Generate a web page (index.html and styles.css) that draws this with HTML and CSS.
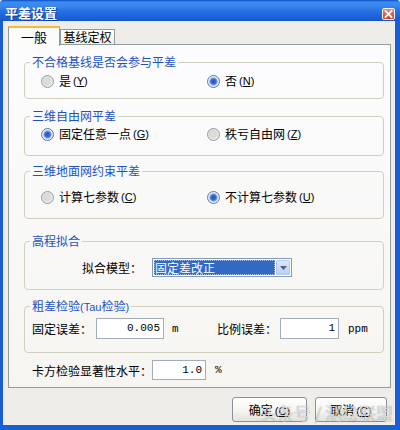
FILE: index.html
```
<!DOCTYPE html>
<html lang="zh-CN">
<head>
<meta charset="utf-8">
<title>平差设置</title>
<link rel="stylesheet" href="styles.css">
</head>
<body>
<div class="window">
  <div class="titlebar">
    <span class="title">平差设置</span>
    <span class="close"><svg width="9" height="8" viewBox="0 0 9 8"><path d="M1.5 1 L7.5 7 M7.5 1 L1.5 7" stroke="#fff" stroke-width="1.8" stroke-linecap="square"/></svg></span>
  </div>
  <div class="client">
    <div class="tabs">
      <div class="tab active">一般</div>
      <div class="tab">基线定权</div>
    </div>
    <div class="panel">
      <fieldset class="group g1">
        <legend>不合格基线是否会参与平差</legend>
        <div class="radios">
          <label class="opt"><span class="radio"></span>是<span class="key">(<u>Y</u>)</span></label>
          <label class="opt"><span class="radio on"></span>否<span class="key">(<u>N</u>)</span></label>
        </div>
      </fieldset>
      <fieldset class="group g2">
        <legend>三维自由网平差</legend>
        <div class="radios">
          <label class="opt"><span class="radio on"></span>固定任意一点<span class="key">(<u>G</u>)</span></label>
          <label class="opt"><span class="radio"></span>秩亏自由网<span class="key">(<u>Z</u>)</span></label>
        </div>
      </fieldset>
      <fieldset class="group g3">
        <legend>三维地面网约束平差</legend>
        <div class="radios">
          <label class="opt"><span class="radio"></span>计算七参数<span class="key">(<u>C</u>)</span></label>
          <label class="opt"><span class="radio on"></span>不计算七参数<span class="key">(<u>U</u>)</span></label>
        </div>
      </fieldset>
      <fieldset class="group g4">
        <legend>高程拟合</legend>
        <div class="fitrow">
          <span class="lbl-fit">拟合模型：</span>
          <span class="select"><span class="sel-value">固定差改正</span><span class="sel-btn"><svg width="7" height="4" viewBox="0 0 7 4"><path d="M0 0 H7 L3.5 4 Z" fill="#4d6185"/></svg></span></span>
        </div>
      </fieldset>
      <fieldset class="group g5">
        <legend>粗差检验<span class="lat">(Tau</span>检验<span class="lat">)</span></legend>
        <div class="errrow">
          <span class="lbl-err1">固定误差：</span>
          <span class="input in1">0.005</span>
          <span class="unit u1">m</span>
          <span class="lbl-err2">比例误差：</span>
          <span class="input in2">1</span>
          <span class="unit u2">ppm</span>
        </div>
      </fieldset>
      <div class="chirow">
        <span class="lbl-chi">卡方检验显著性水平：</span>
        <span class="input in3">1.0</span>
        <span class="unit u3">%</span>
      </div>
    </div>
    <div class="buttons">
      <span class="btn b1">确定<span class="key">(<u>C</u>)</span></span>
      <span class="btn b2">取消<span class="key">(<u>C</u>)</span></span>
    </div>
  </div>
  <div class="watermark">头条号 / 测绘联盟</div>
</div>
</body>
</html>
```
FILE: styles.css
```
* { box-sizing: border-box; }
html, body { margin: 0; padding: 0; }
body {
  width: 400px;
  height: 430px;
  overflow: hidden;
  font-family: "Noto Sans CJK SC", "Noto Sans", sans-serif;
  font-size: 12px;
  color: #000;
  background: #fff;
}
.key, .lat {
  font-family: "Liberation Sans", "DejaVu Sans", sans-serif;
  font-size: 11px;
  margin-left: 2px;
}
.lat { margin-left: 0; }
.window {
  position: relative;
  width: 400px;
  height: 430px;
  display: flex;
  flex-direction: column;
}
.titlebar {
  height: 21px;
  flex: none;
  display: flex;
  justify-content: space-between;
  align-items: flex-start;
  padding: 4px 5px 0 5px;
  background: linear-gradient(#0a4cc0 0, #3b8df2 2px, #3a86ee 6px, #2670e2 11px, #1d62d8 17px, #1857cc 21px);
  border-radius: 3px 3px 0 0;
}
.title {
  color: #fff;
  font-weight: bold;
  font-size: 13px;
  line-height: 17px;
  text-shadow: 1px 1px 0 #0a3a9a;
}
.close {
  width: 13px;
  height: 12px;
  margin-top: 4px;
  border: 1px solid #f4f4f4;
  border-radius: 2px;
  background: linear-gradient(#e98b73, #d8573b 60%, #c8452b);
  display: flex;
  align-items: center;
  justify-content: center;
}
.close svg { display: block; }
.client {
  flex: 1;
  background: #eeede9;
  border-left: 3px solid #1a5ed6;
  border-right: 5px solid #1a5ed6;
  border-bottom: 5px solid #1a5ed6;
  padding-top: 4px;
  display: flex;
  flex-direction: column;
}
.tabs {
  display: flex;
  align-items: flex-end;
  height: 20px;
  margin-left: 5px;
}
.tab {
  height: 15px;
  width: 55px;
  border: 1px solid #919b9c;
  border-bottom: none;
  background: linear-gradient(#ffffff, #f0f0ea);
  text-align: center;
  line-height: 14px;
  font-size: 12px;
  margin-bottom: 1px;
}
.tab.active {
  position: relative;
  z-index: 1;
  height: 20px;
  width: 52px;
  margin-bottom: -1px;
  background: #fbfbf9;
  border-top: 2px solid #f6b93a;
  font-size: 13px;
  line-height: 18px;
}
.panel {
  margin: -1px 4px 0 5px;
  height: 344px;
  border: 1px solid #919b9c;
  background: linear-gradient(#fcfcfe, #f6f5f1);
  padding: 10px 0 0 0;
  display: flex;
  flex-direction: column;
}
.group {
  margin: 0 6px 0 15px;
  min-width: 0;
  border: 1px solid #d0d0bf;
  border-radius: 4px;
  padding: 0;
}
.group legend {
  margin-left: 5px;
  padding: 0 2px;
  color: #1c52c4;
  font-size: 12px;
  line-height: 14px;
}
.g1 { padding-top: 4px; padding-bottom: 9px; }
.g2 { margin-top: 10px; padding-top: 3px; padding-bottom: 13px; }
.g3 { margin-top: 8px; padding-top: 11px; padding-bottom: 13px; }
.g4 { margin-top: 15px; padding-top: 10px; padding-bottom: 12px; }
.g5 { margin-top: 9px; padding-top: 4px; padding-bottom: 13px; }
.radios {
  display: grid;
  grid-template-columns: 166px 1fr;
  padding-left: 16px;
  line-height: 16px;
}
.opt {
  display: flex;
  align-items: center;
  gap: 5px;
  height: 16px;
}
.opt .key { margin-left: -3px; }
u { text-decoration: underline; text-underline-offset: 1px; }
.radio {
  width: 13px;
  height: 13px;
  flex: none;
  border-radius: 50%;
  border: 1px solid #8e9aab;
  background: radial-gradient(circle at 45% 45%, #e2e2dc 0, #d9d9d2 3px, #eeeee9 6px);
}
.radio.on {
  border-color: #5f7aa3;
  background: radial-gradient(circle at 50% 50%, #2453c4 0, #3a6bd6 2.5px, #7a9ce3 3.5px, #dfe6f3 4.5px, #f2f4f8 6px);
}
.fitrow {
  display: flex;
  align-items: center;
  padding-left: 57px;
  height: 19px;
}
.lbl-fit { width: 70px; line-height: 16px; }
.select {
  width: 140px;
  height: 19px;
  border: 1px solid #7f9db9;
  background: #fff;
  display: flex;
  padding: 1px;
}
.sel-value {
  flex: 1;
  background: #316ac5;
  color: #fff;
  line-height: 15px;
  padding-left: 1px;
  outline: 1px dotted #a8c0ea;
  outline-offset: -1px;
}
.sel-btn {
  width: 14px;
  margin-left: 1px;
  background: linear-gradient(#dce6fb, #bccdf6);
  border: 1px solid #b7c8ef;
  border-radius: 1px;
  display: flex;
  align-items: center;
  justify-content: center;
}
.sel-btn svg { display: block; }
.errrow {
  display: flex;
  align-items: center;
  padding-left: 7px;
  height: 21px;
}
.lbl-err1 { width: 64px; }
.lbl-err2 { width: 63px; }
.input {
  height: 21px;
  border: 1px solid #a3adb9;
  background: #fff;
  text-align: right;
  padding-right: 3px;
  font-family: "Liberation Mono", "DejaVu Sans Mono", monospace;
  font-size: 11px;
  line-height: 19px;
}
.in1 { width: 68px; }
.in2 { width: 59px; }
.in3 { width: 54px; height: 20px; line-height: 18px; }
.unit {
  font-family: "Liberation Mono", "DejaVu Sans Mono", monospace;
  font-size: 11px;
}
.u1 { width: 53px; padding-left: 8px; }
.u2 { padding-left: 9px; }
.u3 { padding-left: 9px; }
.chirow {
  margin-top: 7px;
  padding-left: 23px;
  display: flex;
  align-items: center;
  height: 20px;
}
.lbl-chi { width: 120px; }
.buttons {
  display: flex;
  justify-content: flex-end;
  gap: 8px;
  margin-top: 9px;
  padding-right: 8px;
}
.btn {
  height: 25px;
  border: 1px solid #8a8f99;
  border-radius: 3px;
  background: linear-gradient(#ffffff, #f3f3ef 60%, #e2e1da);
  text-align: center;
  line-height: 23px;
}
.b1 { width: 75px; }
.b2 { width: 72px; }
.watermark {
  position: absolute;
  left: 260px;
  top: 402px;
  font-size: 17px;
  line-height: 22px;
  color: rgba(255, 255, 255, 0.8);
  text-shadow: 0 0 1px rgba(60, 60, 60, 0.8);
  white-space: nowrap;
  font-weight: 300;
}
```
